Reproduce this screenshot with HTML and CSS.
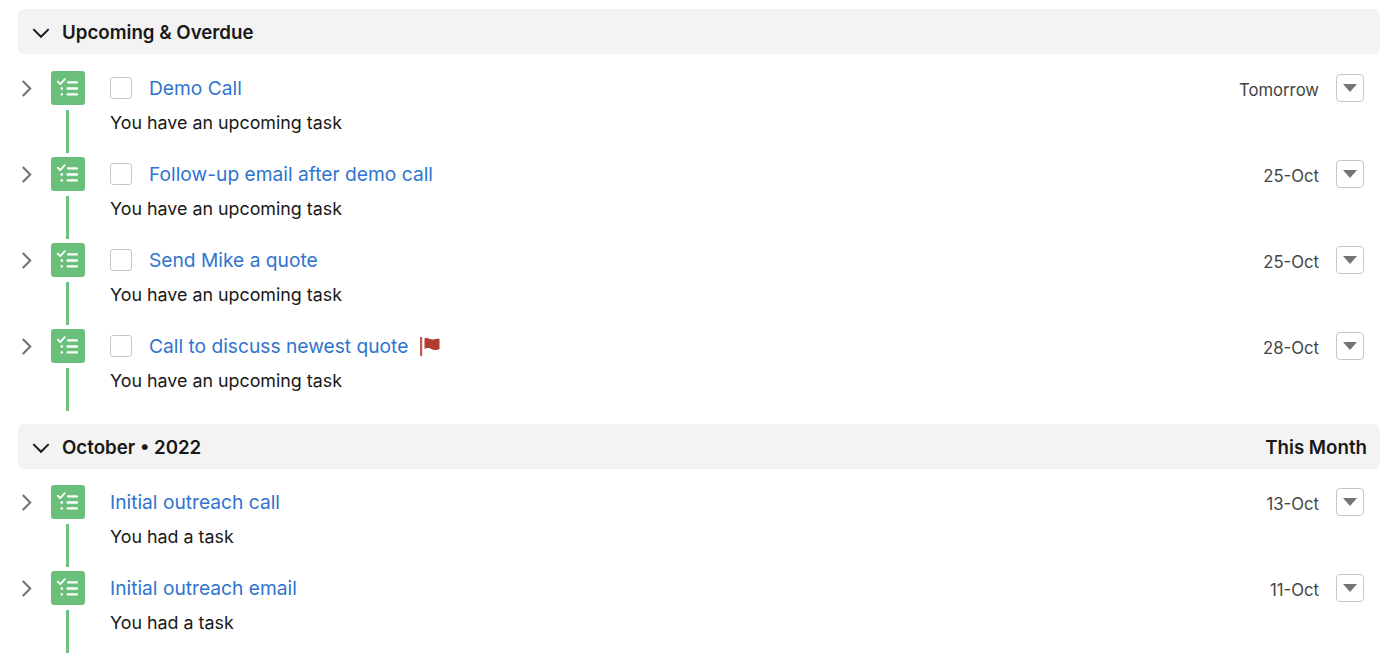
FILE: index.html
```html
<!DOCTYPE html>
<html>
<head>
    <title>Activity</title>
    <link rel="stylesheet" href="styles.css">
</head>
<body>
    <svg class="sprites" width="0" height="0">
        <symbol id="task" viewBox="0 0 34 34">
            <path d="M6.800 10.700l2.400 2.400 4.600-5" fill="none" stroke="#fff" stroke-width="1.800" stroke-linecap="round" stroke-linejoin="round"/>
            <rect x="16" y="10.200" width="11" height="2.400" rx="1" fill="#fff"/>
            <rect x="9.500" y="16.300" width="2.600" height="2.400" rx="1" fill="#fff"/>
            <rect x="15.500" y="16.300" width="11.500" height="2.400" rx="1" fill="#fff"/>
            <rect x="9.500" y="22.200" width="2.600" height="2.400" rx="1" fill="#fff"/>
            <rect x="15.500" y="22.200" width="11.500" height="2.400" rx="1" fill="#fff"/>
        </symbol>
        <symbol id="chev" viewBox="0 0 10 16">
            <path d="M1.500 1L8.500 8l-7 7" fill="none" stroke="#747474" stroke-width="2"/>
        </symbol>
        <symbol id="down" viewBox="0 0 16 10">
            <path d="M1 1L8 8l7-7" fill="none" stroke="#1c1c1c" stroke-width="1.800"/>
        </symbol>
    </svg>

    <section class="group">
        <header class="group-head">
            <svg class="head-chevron"><use href="#down"/></svg>
            <span>Upcoming &amp; Overdue</span>
        </header>

        <div class="row">
            <svg class="row-chevron"><use href="#chev"/></svg>
            <div class="rail"><svg class="task-icon"><use href="#task"/></svg><div class="line"></div></div>
            <div class="body">
                <div class="title-line">
                    <span class="check"></span>
                    <a class="title">Demo Call</a>
                    <span class="date">Tomorrow</span>
                    <button class="menu"><span class="caret"></span></button>
                </div>
                <div class="desc">You have an upcoming task</div>
            </div>
        </div>

        <div class="row">
            <svg class="row-chevron"><use href="#chev"/></svg>
            <div class="rail"><svg class="task-icon"><use href="#task"/></svg><div class="line"></div></div>
            <div class="body">
                <div class="title-line">
                    <span class="check"></span>
                    <a class="title">Follow-up email after demo call</a>
                    <span class="date">25-Oct</span>
                    <button class="menu"><span class="caret"></span></button>
                </div>
                <div class="desc">You have an upcoming task</div>
            </div>
        </div>

        <div class="row">
            <svg class="row-chevron"><use href="#chev"/></svg>
            <div class="rail"><svg class="task-icon"><use href="#task"/></svg><div class="line"></div></div>
            <div class="body">
                <div class="title-line">
                    <span class="check"></span>
                    <a class="title">Send Mike a quote</a>
                    <span class="date">25-Oct</span>
                    <button class="menu"><span class="caret"></span></button>
                </div>
                <div class="desc">You have an upcoming task</div>
            </div>
        </div>

        <div class="row">
            <svg class="row-chevron"><use href="#chev"/></svg>
            <div class="rail"><svg class="task-icon"><use href="#task"/></svg><div class="line"></div></div>
            <div class="body">
                <div class="title-line">
                    <span class="check"></span>
                    <a class="title">Call to discuss newest quote</a>
                    <svg class="flag" viewBox="0 0 20 19">
                        <rect x="0" y="0" width="2.200" height="19" fill="#bb5a52"/>
                        <path d="M4.500 1.500c3-1.500 5.500 1 8 1 1.500 0 3-.8 3.500-.8l3.500 0v10.300c-1.500.8-3 1-4.500 1-3 0-4.500-2-6.500-2-1.500 0-3 .3-4 .8z" fill="#b23b32"/>
                    </svg>
                    <span class="date">28-Oct</span>
                    <button class="menu"><span class="caret"></span></button>
                </div>
                <div class="desc">You have an upcoming task</div>
            </div>
        </div>
    </section>

    <section class="group">
        <header class="group-head">
            <svg class="head-chevron"><use href="#down"/></svg>
            <span>October • 2022</span>
            <span class="head-right">This Month</span>
        </header>

        <div class="row">
            <svg class="row-chevron"><use href="#chev"/></svg>
            <div class="rail"><svg class="task-icon"><use href="#task"/></svg><div class="line"></div></div>
            <div class="body">
                <div class="title-line">
                    <a class="title">Initial outreach call</a>
                    <span class="date">13-Oct</span>
                    <button class="menu"><span class="caret"></span></button>
                </div>
                <div class="desc">You had a task</div>
            </div>
        </div>

        <div class="row">
            <svg class="row-chevron"><use href="#chev"/></svg>
            <div class="rail"><svg class="task-icon"><use href="#task"/></svg><div class="line"></div></div>
            <div class="body">
                <div class="title-line">
                    <a class="title">Initial outreach email</a>
                    <span class="date">11-Oct</span>
                    <button class="menu"><span class="caret"></span></button>
                </div>
                <div class="desc">You had a task</div>
            </div>
        </div>
    </section>
</body>
</html>
```

FILE: styles.css
```css
html, body {
    height: 670px;
    overflow: hidden;
}
body {
    margin: 0;
    padding: 9px 20px 0 18px;
    background: #fff;
    font-family: Inter, "Noto Sans", sans-serif;
    color: #181818;
}
.sprites {
    position: absolute;
}
.group {
    margin-bottom: 13px;
}
.group-head {
    display: flex;
    align-items: center;
    box-sizing: border-box;
    height: 45px;
    padding: 1px 13px 0 14px;
    background: #f3f3f3;
    border-radius: 6px;
    font-size: 18.7px;
    font-weight: 600;
    margin-bottom: 17px;
}
.group + .group .group-head {
    margin-bottom: 16px;
}
.head-chevron {
    width: 18px;
    height: 11px;
    margin-right: 12px;
    margin-top: 2px;
    flex: none;
}
.head-right {
    margin-left: auto;
}
.row {
    display: flex;
    height: 86px;
}
.group .row:last-child {
    height: 82px;
}
.row-chevron {
    width: 11px;
    height: 17px;
    margin: 9px 0 0 3px;
    flex: none;
}
.rail {
    display: flex;
    flex-direction: column;
    align-items: center;
    flex: none;
    width: 34px;
    margin-left: 19px;
}
.task-icon {
    width: 34px;
    height: 34px;
    flex: none;
    background: #6abf7b;
    border-radius: 3px;
}
.line {
    width: 3px;
    flex: 1;
    margin: 5px 0 4px -1px;
    background: #6fc17f;
}
.group .row:last-child .line {
    margin-bottom: 0;
}
.body {
    flex: 1;
    margin-left: 25px;
    min-width: 0;
}
.title-line {
    display: flex;
    align-items: center;
    height: 34px;
}
.check {
    width: 22px;
    height: 22px;
    flex: none;
    box-sizing: border-box;
    border: 1px solid #c9c7c5;
    border-radius: 3px;
    margin-right: 17px;
}
.title {
    font-size: 19.2px;
    color: #2f74d0;
}
.flag {
    width: 20px;
    height: 19px;
    margin-left: 12px;
}
.date {
    margin-left: auto;
    margin-top: 4px;
    font-size: 16.7px;
    color: #444;
}
.menu {
    width: 28px;
    height: 28px;
    padding: 0;
    margin: 0 16px 0 17px;
    display: flex;
    align-items: center;
    justify-content: center;
    background: #fff;
    border: 1px solid #c9c7c5;
    border-radius: 4px;
}
.caret {
    width: 0;
    height: 0;
    border-left: 7px solid transparent;
    border-right: 7px solid transparent;
    border-top: 8px solid #747474;
}
.desc {
    font-size: 17.85px;
    margin-top: 7px;
    line-height: 22px;
}
```
